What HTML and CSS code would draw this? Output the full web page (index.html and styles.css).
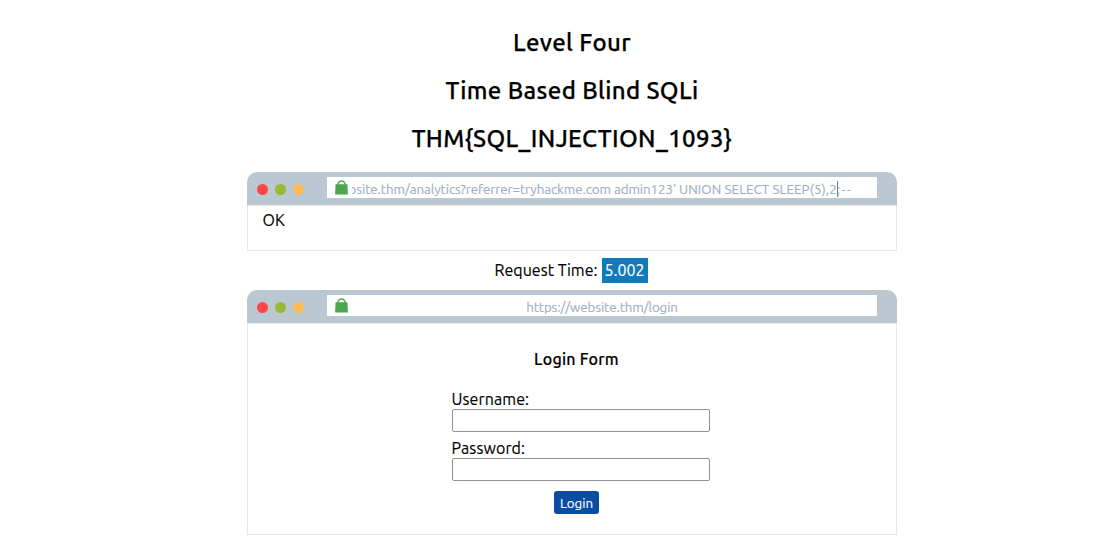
FILE: index.html
```html
<!DOCTYPE html>
<html lang="en">
<head>
<meta charset="utf-8">
<title>Level Four</title>
<link rel="stylesheet" href="styles.css">
</head>
<body>
<main class="level">
  <header class="headings">
    <h1 class="heading">Level Four</h1>
    <h1 class="heading">Time Based Blind SQLi</h1>
    <h1 class="heading">THM{SQL_INJECTION_1093}</h1>
  </header>
  <section class="browser">
    <div class="bar">
      <div class="dots"><i class="dot red"></i><i class="dot green"></i><i class="dot amber"></i></div>
      <div class="address">
        <svg class="lock" viewBox="0 0 13 15"><path d="M3 6V4.3a3.5 3.3 0 0 1 7 0V6" fill="none" stroke="#4ba64f" stroke-width="1.5"/><path d="M1 4.3h11q.5 0 .5.6l.4 9.2q0 .4-.5.4H.6q-.5 0-.5-.4L.5 4.9q0-.6.5-.6z" fill="#4ba64f"/></svg>
        <div class="url url-query"><span>https://website.thm/analytics?referrer=tryhackme.com admin123' <span class="sql">UNION SELECT SLEEP(5),2</span><i class="caret"></i><span class="comment">;--</span></span></div>
      </div>
    </div>
    <div class="page result">OK</div>
  </section>
  <div class="timing"><span class="timing-label">Request Time:</span><span class="badge">5.002</span></div>
  <section class="browser">
    <div class="bar">
      <div class="dots"><i class="dot red"></i><i class="dot green"></i><i class="dot amber"></i></div>
      <div class="address">
        <svg class="lock" viewBox="0 0 13 15"><path d="M3 6V4.3a3.5 3.3 0 0 1 7 0V6" fill="none" stroke="#4ba64f" stroke-width="1.5"/><path d="M1 4.3h11q.5 0 .5.6l.4 9.2q0 .4-.5.4H.6q-.5 0-.5-.4L.5 4.9q0-.6.5-.6z" fill="#4ba64f"/></svg>
        <div class="url">https://website.thm/login</div>
      </div>
    </div>
    <form class="page login">
      <h2 class="form-title">Login Form</h2>
      <label class="field"><span class="field-label">Username:</span><input class="input" type="text"></label>
      <label class="field"><span class="field-label">Password:</span><input class="input" type="password"></label>
      <button class="submit" type="button">Login</button>
    </form>
  </section>
</main>
</body>
</html>
```
FILE: styles.css
```css
* { box-sizing: border-box; }
body { margin: 0; background: #fff; color: #000; font: 16px/18px Ubuntu, "Noto Sans", sans-serif; -webkit-text-stroke: 0.15px; overflow: hidden; }
.level { width: 650px; margin-left: 247px; }
.headings { padding-top: 19px; height: 172px; }
.heading { margin: 0; height: 48px; font-size: 24px; line-height: 48px; font-weight: 500; letter-spacing: 0.37px; text-align: center; white-space: nowrap; -webkit-text-stroke: 0.25px; }
.bar { display: flex; height: 33px; padding: 5px 20px 7px 10px; background: #bbc8d2; border-radius: 10px 10px 0 0; }
.dots { display: flex; gap: 7px; width: 70px; padding-top: 7px; }
.dot { width: 11px; height: 11px; border-radius: 50%; }
.red { background: #ff4545; }
.green { background: #97bb30; }
.amber { background: #ffbc57; }
.address { display: flex; width: 550px; height: 21px; padding: 0 25px 0 8px; background: #fff; }
.lock { width: 13px; height: 15px; margin: 3px 4px 0 0; flex: none; }
.url { display: flex; justify-content: center; width: 500px; height: 21px; overflow: hidden; color: #9eafc4; font-size: 13.333px; line-height: 25px; letter-spacing: -0.1px; white-space: pre; }
.url-query { justify-content: flex-end; letter-spacing: -0.07px; }
.sql { letter-spacing: 0.09px; }
.comment { letter-spacing: 1.4px; }
.caret { display: inline-block; width: 1px; height: 16px; margin-right: -1px; background: #68778c; vertical-align: -3px; }
.page { border: 1px solid #e8e8e8; }
.result { height: 46px; padding: 5px 14.5px; }
.timing { display: flex; justify-content: center; gap: 4px; height: 25px; margin: 7px 2px 7px 0; line-height: 24px; }
.badge { width: 46px; height: 25px; background: #117abb; color: #fff; line-height: 25px; text-align: center; }
.timing-label { letter-spacing: 0.03px; }
.login { display: flex; flex-direction: column; align-items: center; height: 212px; padding: 26px 0 0 9px; }
.form-title { margin: 0 0 22px; font-size: 16px; line-height: 18px; font-weight: 500; letter-spacing: 0.23px; }
.field { display: flex; flex-direction: column; width: 258px; height: 49px; margin-left: 8px; }
.field-label { height: 19px; letter-spacing: 0.1px; }
.input { width: 258px; height: 23px; border: 1px solid #8f8f9d; border-radius: 2px; padding: 0; background: #fff; }
.submit { width: 45px; height: 23px; margin-top: 3px; padding: 1px 0 0; border: 0; border-radius: 3px; background: #0a4da2; color: #fff; font: 13.333px/24px Ubuntu, "Noto Sans", sans-serif; }
```
